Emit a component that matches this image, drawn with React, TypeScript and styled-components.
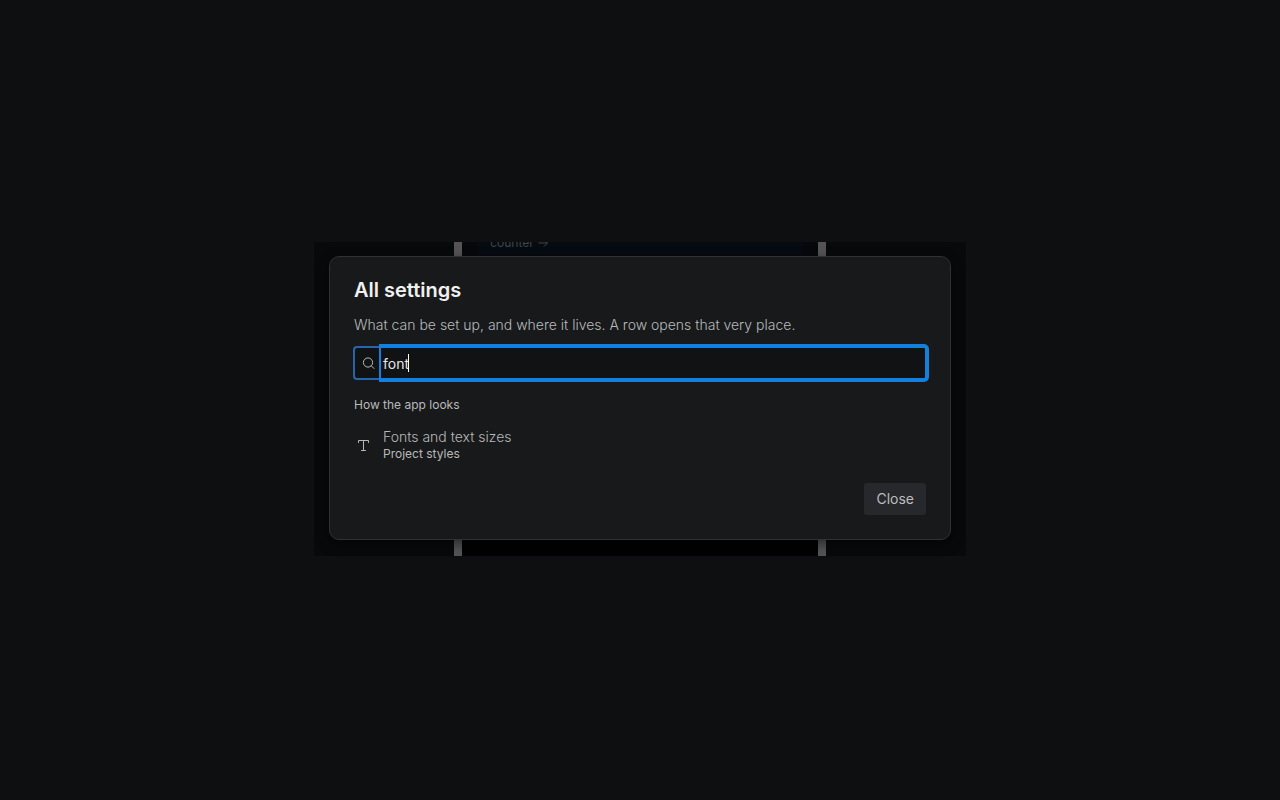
import React, { useState } from "react";
import styled, { createGlobalStyle } from "styled-components";

const GlobalStyle = createGlobalStyle`
  * { box-sizing: border-box; }
  body {
    margin: 0;
    background: #0e0f10;
    color: #b8b9bb;
    font-family: Inter, "Liberation Sans", sans-serif;
    font-size: 14px;
    font-weight: 300;
    line-height: 20px;
  }
`;

const Page = styled.main`
  min-height: 100vh;
  display: grid;
  grid-template-columns: minmax(0, 652px);
  place-content: center;
  padding-bottom: 2px;
`;

const Stage = styled.div`
  position: relative;
  padding: 14px 15px 16px;
  background: #08090a;
`;

const Backdrop = styled.div`
  position: absolute;
  inset: 0;
  display: flex;
  justify-content: center;
  overflow: hidden;
`;

const Device = styled.div`
  width: 57%;
  border: solid #545456;
  border-width: 0 8px;
  background: linear-gradient(#07080b 50%, #020203 50%);
`;

const DeviceScreen = styled.div`
  height: 14px;
  margin: 0 16px;
  padding: 0 12px;
  background: #060a11;
  color: #434549;
  font-size: 12px;
  font-weight: 400;
  line-height: 2px;
`;

const DeviceLink = styled.a`
  display: flex;
  gap: 4px;
  align-items: center;
  height: 2px;
  color: inherit;
  text-decoration: none;
`;

const Dialog = styled.section`
  position: relative;
  padding: 20px 24px 24px;
  border: 1px solid #303133;
  border-radius: 10px;
  background: #18191b;
  box-shadow: 0 4px 12px #00000080;
`;

const Title = styled.h1`
  margin: 0;
  color: #f0f0f1;
  font-size: 20px;
  font-weight: 600;
  line-height: 26px;
`;

const Description = styled.p`
  margin: 12px 0 9px;
  line-height: 20px;
`;

const Field = styled.div`
  display: flex;
  align-items: center;
  margin: 0 -3px 0 -1px;
`;

const IconCell = styled.label`
  display: flex;
  align-items: center;
  justify-content: center;
  width: 26px;
  height: 34px;
  padding-left: 2px;
  border: 2px solid #2864a6;
  border-right: 0;
  border-radius: 4px 0 0 4px;
  background: #111214;
`;

const InputWrap = styled.div`
  position: relative;
  flex: 1;
  display: flex;
`;

const SearchInput = styled.input`
  width: 100%;
  min-width: 0;
  height: 38px;
  padding: 0 2px;
  border: 4px solid #137fdf;
  border-left-width: 2px;
  border-radius: 0 5px 5px 0;
  outline: 0;
  background: #111214;
  color: #e6e6e7;
  font: inherit;
  font-weight: 400;
`;

const Caret = styled.span`
  position: absolute;
  top: 10px;
  left: 29px;
  width: 1px;
  height: 18px;
  background: #ffffff;
`;

const GroupTitle = styled.h2`
  margin: 14px 0 12px;
  font-size: 12px;
  font-weight: 400;
  line-height: 18px;
`;

const SettingRow = styled.button`
  display: flex;
  align-items: center;
  gap: 13px;
  width: 100%;
  padding: 2px 3px;
  border: 0;
  background: none;
  color: inherit;
  font: inherit;
  text-align: left;
`;

const RowText = styled.span`
  display: grid;
`;

const RowName = styled.span`
  line-height: 18px;
`;

const RowPlace = styled.span`
  font-size: 12px;
  font-weight: 400;
  line-height: 16px;
`;

const Footer = styled.footer`
  display: flex;
  justify-content: flex-end;
  margin-top: 19px;
`;

const CloseButton = styled.button`
  height: 32px;
  padding: 0 12px;
  border: 0;
  border-radius: 3px;
  background: #27282b;
  color: #bcbdbf;
  font: inherit;
  font-weight: 400;
`;

const SearchIcon = () => (
  <svg width="13" height="13" viewBox="0 0 13 13" fill="none" stroke="#b8b8b8" aria-hidden="true">
    <circle cx="6" cy="5.5" r="4.6" />
    <path d="M9.3 8.8 12 11.5" strokeLinecap="round" />
  </svg>
);

const TypeIcon = () => (
  <svg width="13" height="13" viewBox="0 0 13 13" fill="none" stroke="#b8b8b8" aria-hidden="true">
    <path d="M1.5 3.5v-2h10v2M6.5 1.5v10M4.5 11.5h4" strokeLinecap="round" strokeLinejoin="round" />
  </svg>
);

export default function App() {
  const [query, setQuery] = useState("font");
  return (
    <>
      <GlobalStyle />
      <Page>
        <Stage>
          <Backdrop>
            <Device>
              <DeviceScreen>
                <DeviceLink href="#counter">
                  counter
                  <svg width="10" height="10" viewBox="0 0 10 10" fill="none" stroke="currentColor" aria-hidden="true">
                    <path d="M.5 5h9M6 1.5 9.5 5 6 8.5" />
                  </svg>
                </DeviceLink>
              </DeviceScreen>
            </Device>
          </Backdrop>
          <Dialog role="dialog" aria-labelledby="settings-title">
            <Title id="settings-title">All settings</Title>
            <Description>What can be set up, and where it lives. A row opens that very place.</Description>
            <Field>
              <IconCell htmlFor="settings-search" aria-label="Search settings">
                <SearchIcon />
              </IconCell>
              <InputWrap>
                <SearchInput
                  id="settings-search"
                  type="text"
                  value={query}
                  onChange={(event) => setQuery(event.target.value)}
                />
                <Caret />
              </InputWrap>
            </Field>
            <GroupTitle>How the app looks</GroupTitle>
            <SettingRow type="button">
              <TypeIcon />
              <RowText>
                <RowName>Fonts and text sizes</RowName>
                <RowPlace>Project styles</RowPlace>
              </RowText>
            </SettingRow>
            <Footer>
              <CloseButton type="button">Close</CloseButton>
            </Footer>
          </Dialog>
        </Stage>
      </Page>
    </>
  );
}
